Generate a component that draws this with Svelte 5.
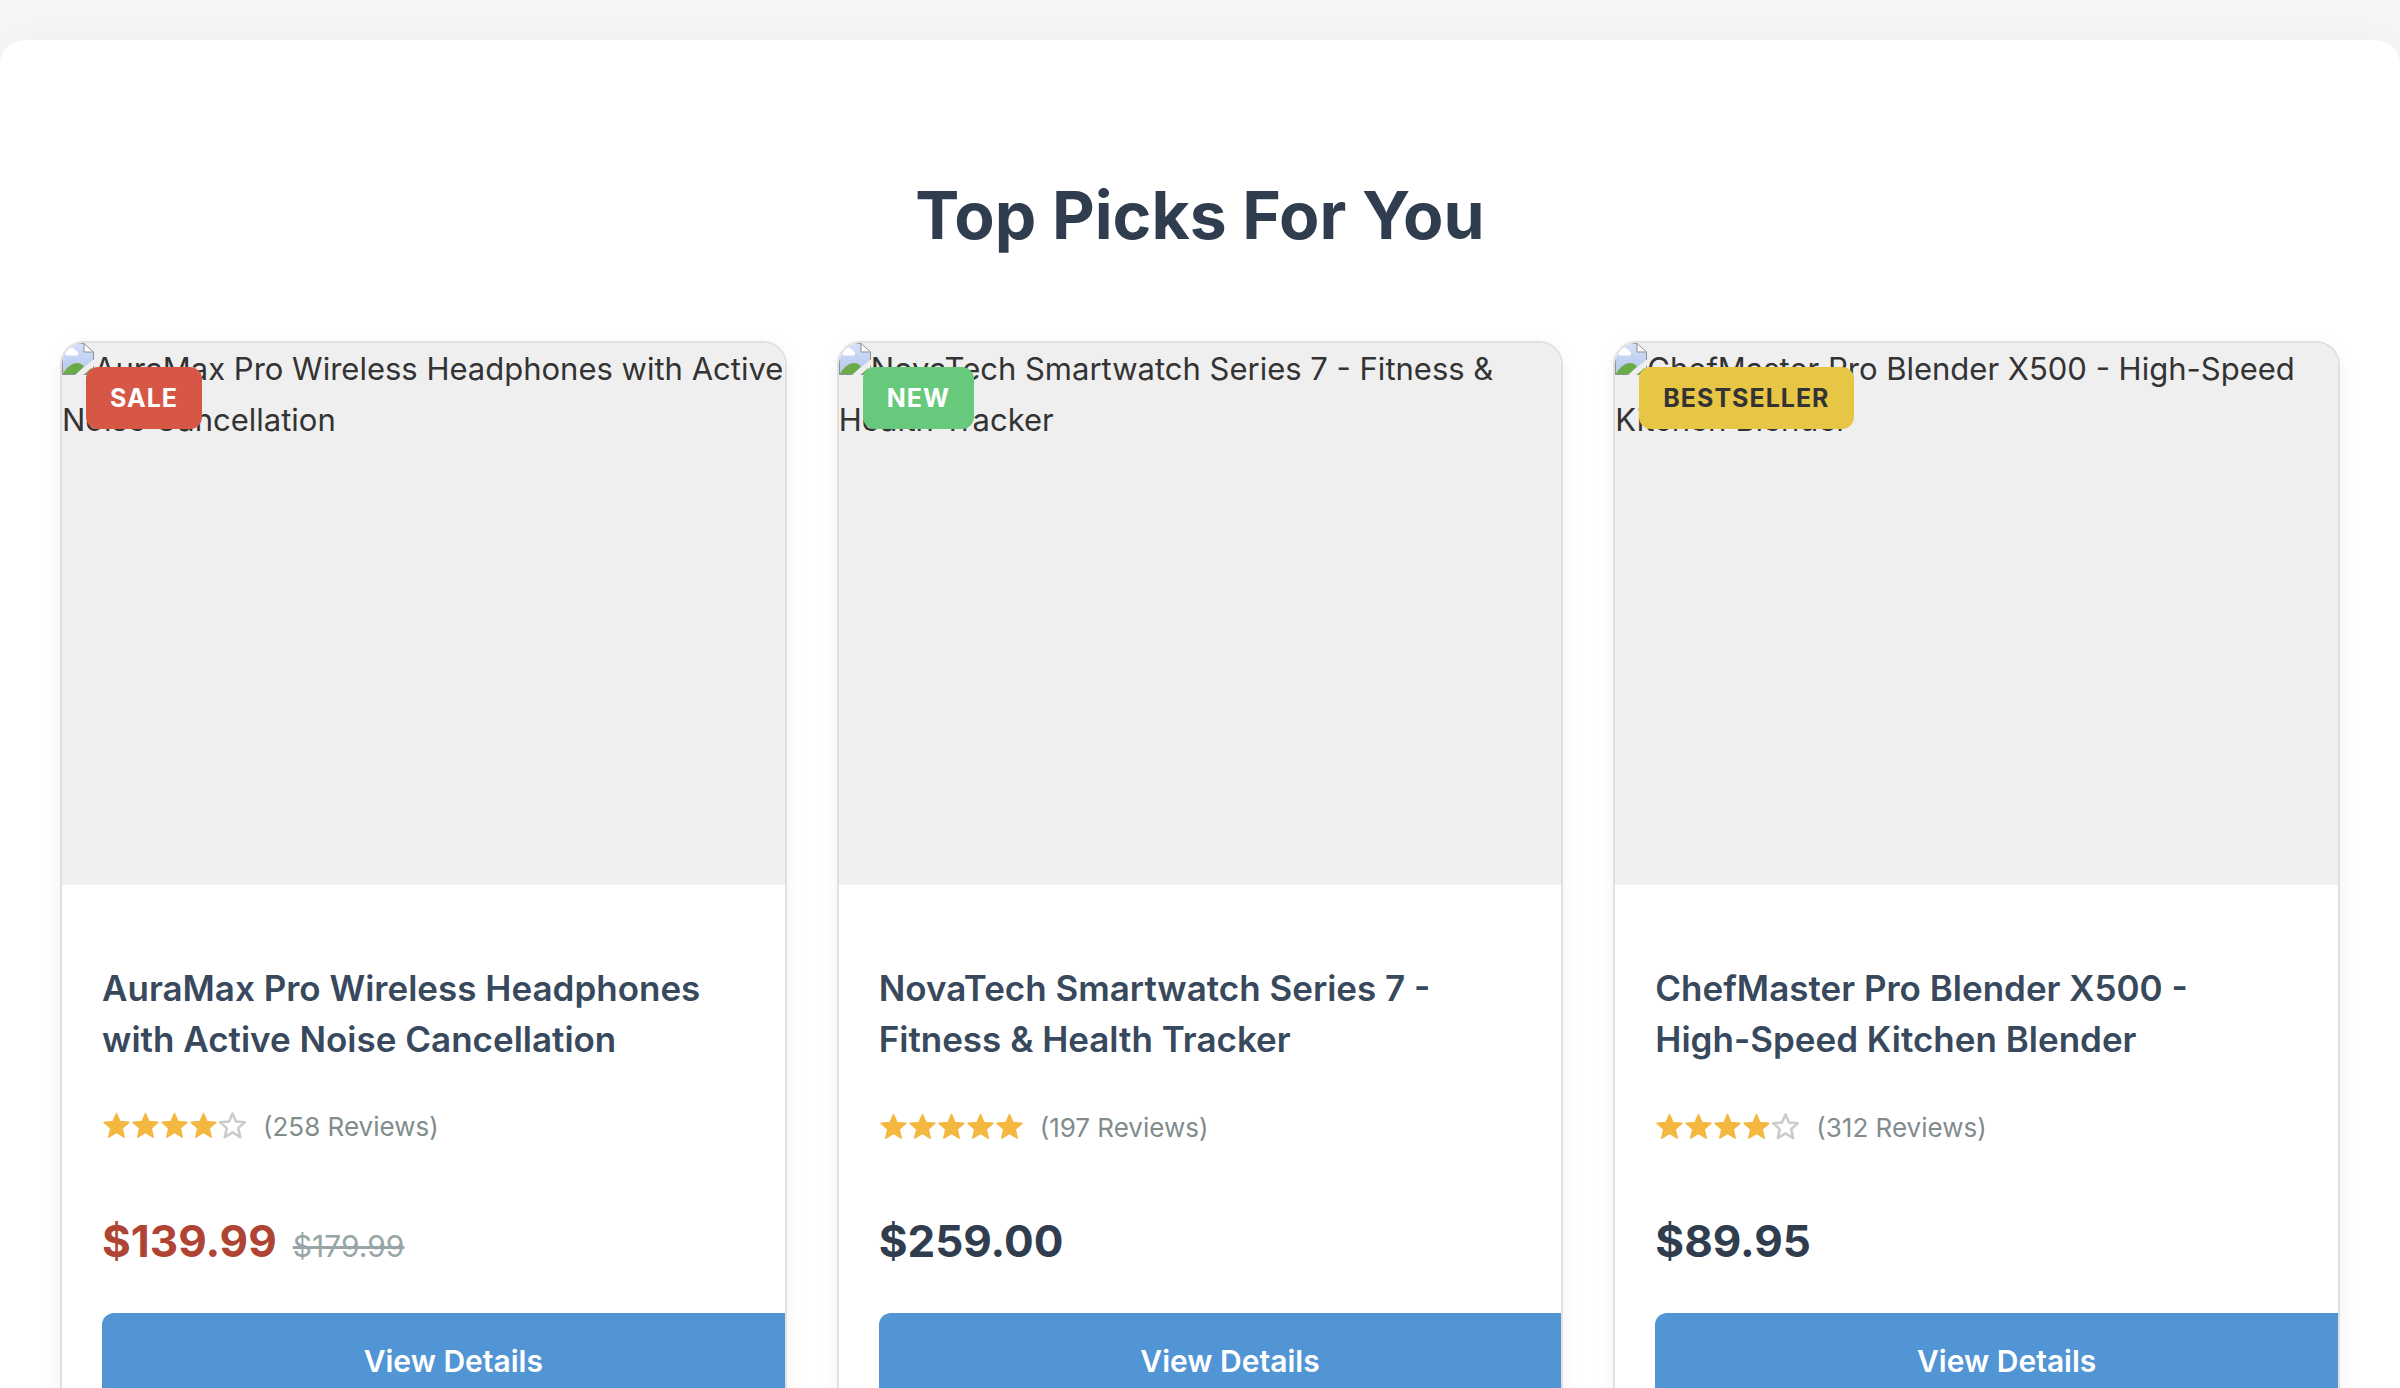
<script>
  const products = [
    {
      name: 'AuraMax Pro Wireless Headphones with Active Noise Cancellation',
      badge: 'Sale',
      tone: 'sale',
      stars: 4,
      reviews: 258,
      price: '$139.99',
      oldPrice: '$179.99'
    },
    {
      name: 'NovaTech Smartwatch Series 7 - Fitness & Health Tracker',
      badge: 'New',
      tone: 'new',
      stars: 5,
      reviews: 197,
      price: '$259.00'
    },
    {
      name: 'ChefMaster Pro Blender X500 - High-Speed Kitchen Blender',
      badge: 'Bestseller',
      tone: 'best',
      stars: 4,
      reviews: 312,
      price: '$89.95'
    }
  ];
  const starPath =
    'M14.5 3.4 L17.7 10.9 L26 11.6 L19.8 17 L21.7 25.4 L14.5 21 L7.3 25.4 L9.2 17 L3 11.6 L11.3 10.9 Z';
</script>

<main class="panel">
  <h1>Top Picks For You</h1>
  <div class="grid">
    {#each products as product}
      <article class="card">
        <div class="media">
          <svg class="missing" viewBox="0 0 32 32" aria-hidden="true">
            <defs>
              <linearGradient id="sky-{product.tone}" x1="0" y1="0" x2="0" y2="1">
                <stop offset="0" stop-color="#d3e0fa" />
                <stop offset="1" stop-color="#b5c6ec" />
              </linearGradient>
            </defs>
            <path d="M0.5 0.5H22L31 9V17L13 31.5H0.5Z" fill="url(#sky-{product.tone})" />
            <path d="M4.5 12.5a2.8 2.8 0 0 1 0.5-5a4.6 4.6 0 0 1 8.5 0a2.8 2.8 0 0 1 1.5 5Z" fill="#fff" />
            <path d="M0.5 31.5C5 24 10 20 15 20C18 20 20 21 22 23.5L13.5 31.5Z" fill="#6aab48" />
            <path d="M22 31.5L29 25L31.5 27V31.5Z" fill="#6aab48" />
            <path d="M22 0.5V9H31.5Z" fill="#fff" />
            <path
              d="M13.5 31.5H0.5V0.5H22L31.5 9V17M22 0.5V9H31.5M31.5 23V31.5H21"
              fill="none"
              stroke="#8e9296"
              stroke-width="1"
            />
            <path d="M14 32L32 16.5V22.5L21 32Z" fill="#efefef" />
          </svg>
          <span>{product.name}</span>
          <strong class="badge {product.tone}">{product.badge}</strong>
        </div>
        <div class="body">
          <h2>{product.name}</h2>
          <div class="rating">
            <span class="stars" role="img" aria-label="{product.stars} out of 5 stars">
              {#each [1, 2, 3, 4, 5] as n}
                <svg class="star" class:empty={n > product.stars} viewBox="1 2 27 27"><path d={starPath} /></svg>
              {/each}
            </span>
            <span class="reviews">({product.reviews} Reviews)</span>
          </div>
          <p class="price" class:reduced={product.oldPrice}>
            <span class="now">{product.price}</span>
            {#if product.oldPrice}<del>{product.oldPrice}</del>{/if}
          </p>
          <a class="button" href="#details-{product.tone}">View Details</a>
        </div>
      </article>
    {/each}
  </div>
</main>

<style>
  :global(body) {
    margin: 0;
    background: #f4f6f8;
    color: #333;
    font-family: Inter, 'Liberation Sans', sans-serif;
    font-size: 31px;
    line-height: 51px;
  }
  :global(html) {
    scrollbar-width: none;
  }
  .panel {
    margin: 40px 0;
    padding: 120px 60px;
    border-radius: 24px;
    background: #fff;
    box-shadow: 0 10px 60px rgba(0, 0, 0, 0.05);
  }
  h1 {
    margin: 0 0 70px;
    color: #303d4e;
    font-size: 66px;
    font-weight: 700;
    line-height: 111px;
    text-align: center;
  }
  .grid {
    display: grid;
    grid-template-columns: repeat(3, minmax(0, 1fr));
    gap: 50px;
  }
  .card {
    overflow: hidden;
    border: 2px solid #e0e0e0;
    border-radius: 24px;
    background: #fff;
    box-shadow: 0 4px 20px rgba(0, 0, 0, 0.05);
  }
  .media {
    position: relative;
    aspect-ratio: 4 / 3;
    background: #efefef;
  }
  .missing {
    float: left;
    width: 32px;
    height: 32px;
  }
  .badge {
    position: absolute;
    top: 24px;
    left: 24px;
    padding: 12px 24px;
    border-radius: 12px;
    color: #fff;
    font-size: 25px;
    font-weight: 700;
    line-height: 38px;
    letter-spacing: 1px;
    text-transform: uppercase;
  }
  .sale {
    background: #d65745;
  }
  .new {
    background: #67c97b;
  }
  .best {
    background: #e7c545;
    color: #333;
  }
  .body {
    padding: 78px 40px 40px;
  }
  h2 {
    margin: 0 0 40px;
    padding-right: 24px;
    color: #38495d;
    font-size: 35px;
    font-weight: 600;
    line-height: 51px;
  }
  .rating {
    display: flex;
    align-items: center;
    gap: 16px;
    height: 44px;
    margin-bottom: 56px;
  }
  .stars {
    display: flex;
  }
  .star {
    width: 29px;
    height: 29px;
    fill: #f4b740;
    stroke: #f4b740;
    stroke-width: 1.4;
    stroke-linejoin: round;
  }
  .empty {
    fill: none;
    stroke: #ccc;
    stroke-width: 2.4;
  }
  .reviews {
    color: #818c8d;
    font-size: 26px;
  }
  .price {
    display: flex;
    align-items: baseline;
    gap: 16px;
    margin: 0 0 36px;
    color: #303d4e;
    line-height: 72px;
  }
  .now {
    font-size: 44px;
    font-weight: 700;
  }
  .reduced .now {
    color: #af4434;
  }
  del {
    color: #97a5a6;
    font-size: 30px;
    line-height: 48px;
  }
  .button {
    display: block;
    width: 100%;
    padding: 24px 30px;
    border-radius: 12px;
    background: #5295d5;
    color: #fff;
    font-size: 30px;
    font-weight: 600;
    line-height: 48px;
    text-align: center;
    text-decoration: none;
  }
</style>
